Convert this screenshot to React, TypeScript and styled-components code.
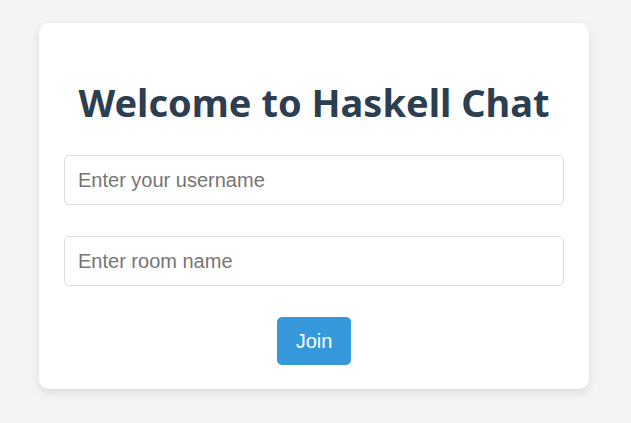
import styled, { createGlobalStyle } from "styled-components";

const GlobalStyle = createGlobalStyle`
  html, body {
    margin: 0;
    padding: 0;
    background: #f4f4f4;
  }
`;

const Page = styled.div`
  width: 631px;
  height: 423px;
  padding: 23px 0 0 39px;
  box-sizing: border-box;
  font-family: "Liberation Sans", Arial, sans-serif;
`;

const Card = styled.div`
  width: 550px;
  height: 366px;
  box-sizing: border-box;
  background: #ffffff;
  border-radius: 10px;
  box-shadow: 0 4px 10px rgba(0, 0, 0, 0.1);
  padding: 0 25px;
  display: flex;
  flex-direction: column;
  align-items: center;
`;

const Title = styled.h1`
  margin: 55px 0 0;
  font-family: "Noto Sans", "Open Sans", sans-serif;
  font-weight: 700;
  font-size: 38px;
  line-height: 48px;
  color: #2c3e50;
  white-space: nowrap;
`;

const Field = styled.input<{ $top: number }>`
  width: 500px;
  height: 50px;
  box-sizing: border-box;
  margin-top: ${(p) => p.$top}px;
  padding: 0 13px;
  border: 1px solid #dddddd;
  border-radius: 5px;
  font-family: "Liberation Sans", Arial, sans-serif;
  font-size: 20px;
  color: #333;
  outline: none;

  &::placeholder {
    color: #757575;
  }
`;

const JoinButton = styled.button`
  margin-top: 31px;
  width: 74px;
  height: 48px;
  border: none;
  border-radius: 5px;
  background: #3498db;
  color: #ffffff;
  font-family: "Liberation Sans", Arial, sans-serif;
  font-size: 20px;
  cursor: pointer;
`;

export default function App() {
  return (
    <>
      <GlobalStyle />
      <Page>
        <Card>
          <Title>Welcome to Haskell Chat</Title>
          <Field $top={29} placeholder="Enter your username" />
          <Field $top={31} placeholder="Enter room name" />
          <JoinButton>Join</JoinButton>
        </Card>
      </Page>
    </>
  );
}
